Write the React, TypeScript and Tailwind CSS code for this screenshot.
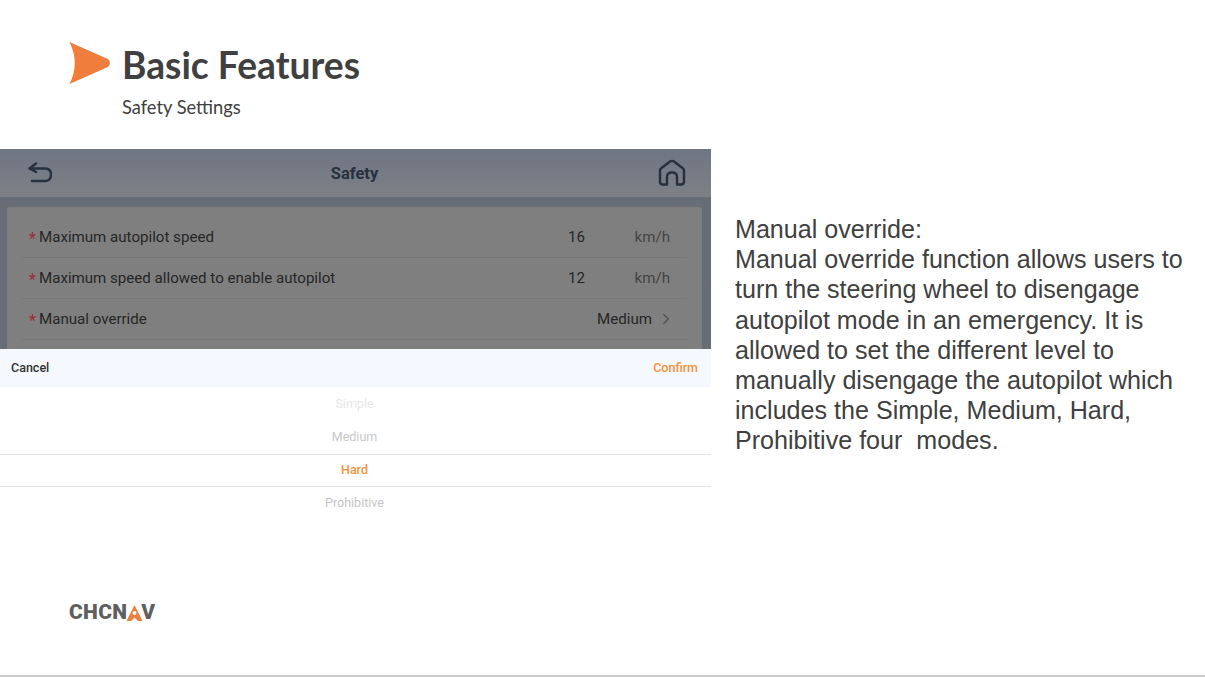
import React from 'react';
import { ChevronRight } from 'lucide-react';

const Row = ({ label, value, unit, chevron }: { label: string; value: string; unit?: string; chevron?: boolean }) => (
    <div className="h-[41px] mx-[15px] pl-[7px] pr-[17px] flex items-center border-b border-[#777777] text-[15.1px] text-[#262626]">
        <span className="text-[#9c2b3c] w-[10px] text-[16px] leading-none pt-[4px]">*</span>
        <span className="flex-1">{label}</span>
        {chevron ? (
            <>
                <span>{value}</span>
                <ChevronRight size={18} strokeWidth={1.6} className="text-[#4f4f4f] ml-[5px] -mr-[5px]" />
            </>
        ) : (
            <>
                <span className="w-[66px]">{value}</span>
                <span className="w-[36px] text-right text-[#444444]">{unit}</span>
            </>
        )}
    </div>
);

const PickerItem = ({ label, className }: { label: string; className: string }) => (
    <div className={`h-[33px] pr-[2px] flex items-center justify-center text-[12.5px] ${className}`}>{label}</div>
);

export default function App() {
    return (
        <div className="w-[1205px] h-[677px] bg-white flex flex-col overflow-hidden font-['Roboto',sans-serif]">
            {/* Slide header */}
            <div className="h-[149px] shrink-0 pl-[69px] pt-[42px] flex gap-[11px]">
                <svg width="42" height="42" viewBox="0 0 42 42" className="shrink-0">
                    <path d="M0.5 0 L39 17 Q43 21 39 25 L0.5 42 Q11 21 0.5 0 Z" fill="#ef7d3c" />
                </svg>
                <div className="font-['Lato',sans-serif]">
                    <div className="text-[37.2px] leading-[46px] font-bold text-[#404040]">Basic Features</div>
                    <div className="text-[18.3px] leading-[24px] text-[#404040] mt-[7px]">Safety Settings</div>
                </div>
            </div>

            <div className="flex h-[371px] shrink-0">
                {/* Tablet screen with dimmed page and picker */}
                <div className="w-[711px] shrink-0 flex flex-col">
                    <div className="h-[48px] shrink-0 bg-gradient-to-b from-[#6f7683] to-[#7d8086] pl-[28px] pr-[25px] flex items-center justify-between">
                        <svg width="24" height="22" viewBox="0 0 24 22" fill="none" stroke="#26303f" strokeWidth="2.4" strokeLinecap="round" strokeLinejoin="round">
                            <path d="M8 1.5 L1.5 6.5 L8 10" />
                            <path d="M2 6.5 H17 Q23 6.5 23 12.5 Q23 19 17 19 H4" />
                        </svg>
                        <span className="text-[16.5px] font-bold text-[#26303f] pt-[3px] -ml-[1px]">Safety</span>
                        <svg width="28" height="28" viewBox="0 0 28 28" fill="none" stroke="#26303f" strokeWidth="2.4" strokeLinecap="round" strokeLinejoin="round">
                            <path d="M9 25.5 H5 Q2 25.5 2 22.5 V11.5 Q2 10 3.5 9 L12 2.5 Q14 1.2 16 2.5 L24.5 9 Q26 10 26 11.5 V22.5 Q26 25.5 23 25.5 H19 V18 Q19 13.5 14 13.5 Q9 13.5 9 18 Z" />
                        </svg>
                    </div>
                    <div className="h-[152px] shrink-0 bg-[#666d77] pl-[7px] pr-[9px] pt-[10px] overflow-hidden">
                        <div className="bg-[#7f7f7f] rounded-t-[3px] h-[142px] pt-[10px]">
                            <Row label="Maximum autopilot speed" value="16" unit="km/h" />
                            <Row label="Maximum speed allowed to enable autopilot" value="12" unit="km/h" />
                            <Row label="Manual override" value="Medium" chevron />
                        </div>
                    </div>
                    <div className="h-[38px] shrink-0 bg-[#f5f8fe] pl-[11px] pr-[13px] pt-[1px] flex items-center justify-between text-[12.5px] font-medium">
                        <span className="text-[#303133]">Cancel</span>
                        <span className="text-[#f59038]">Confirm</span>
                    </div>
                    <div className="pt-[1px]">
                        <PickerItem label="Simple" className="text-[#e6e6e6]" />
                        <PickerItem label="Medium" className="text-[#c8c8c8]" />
                        <PickerItem label="Hard" className="text-[#f59038] font-medium border-y border-[#e4e4e4]" />
                        <PickerItem label="Prohibitive" className="text-[#c4c4c4]" />
                    </div>
                </div>

                {/* Description */}
                <div className="pl-[24px] pt-[65px] w-[490px] text-[25.1px] leading-[30.2px] text-[#404040] font-['Liberation_Sans',sans-serif] whitespace-pre">
                    {'Manual override:\nManual override function allows users to\nturn the steering wheel to disengage\nautopilot mode in an emergency. It is\nallowed to set the different level to\nmanually disengage the autopilot which\nincludes the Simple, Medium, Hard,\nProhibitive four  modes.'}
                </div>
            </div>

            {/* Footer logo */}
            <div className="flex-1 pl-[69px] pt-[81px]">
                <div className="flex items-center h-[24px] font-black text-[21px] text-[#5f5f5f]">
                    <span className="tracking-[0.3px]">CHCN</span>
                    <svg width="17" height="16" viewBox="0 0 17 16" className="-ml-[1px] shrink-0">
                        <path d="M8.5 0 L16.5 16 H12 L8.5 12.5 L5 16 H0.5 Z" fill="#ef7d3c" />
                        <circle cx="8.5" cy="8" r="2" fill="#ffffff" />
                    </svg>
                    <span className="-ml-[2px]">V</span>
                </div>
            </div>
            <div className="h-[2px] shrink-0 bg-[#c9c9c9]" />
        </div>
    );
}
